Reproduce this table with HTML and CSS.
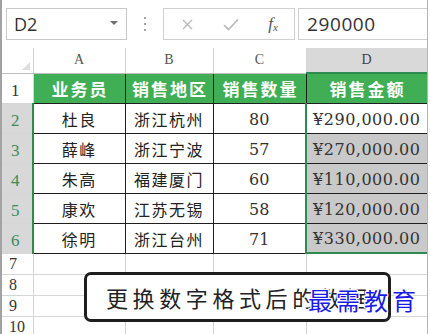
FILE: index.html
```html
<!DOCTYPE html>
<html lang="zh-CN">
<head>
<meta charset="utf-8">
<title>销售表</title>
<link rel="stylesheet" href="styles.css">
</head>
<body>
<div class="sheet">
  <div class="toolbar">
    <div class="namebox"><span class="ref">D2</span><span class="caret"></span></div>
    <div class="grip"><i></i><i></i><i></i></div>
    <div class="fxbox">
      <span class="slot s1"><svg width="11" height="11" viewBox="0 0 11 11"><path d="M1 1L10 10M10 1L1 10" stroke="#b9b9b9" stroke-width="1.4" fill="none"/></svg></span>
      <span class="slot s2"><svg width="16" height="13" viewBox="0 0 16 13"><path d="M1 7L5.5 11.5L15 1.5" stroke="#b9b9b9" stroke-width="1.6" fill="none"/></svg></span>
      <span class="slot s3"><span class="fx">f<span class="fxsub">x</span></span></span>
    </div>
    <div class="formula">290000</div>
  </div>
  <table class="grid">
    <colgroup>
      <col class="c0"><col class="c1"><col class="c2"><col class="c3"><col class="c4">
    </colgroup>
    <tr class="colhead">
      <th class="corner"><span class="tri"></span></th>
      <th>A</th><th>B</th><th>C</th><th class="selcol">D</th>
    </tr>
    <tr class="row">
      <th class="rn">1</th>
      <td class="hd">业务员</td><td class="hd">销售地区</td><td class="hd">销售数量</td><td class="hd">销售金额</td>
    </tr>
    <tr class="row">
      <th class="rn sel">2</th>
      <td class="cn">杜良</td><td class="cn">浙江杭州</td><td class="num">80</td><td class="num money active">¥290,000.00</td>
    </tr>
    <tr class="row">
      <th class="rn sel">3</th>
      <td class="cn">薛峰</td><td class="cn">浙江宁波</td><td class="num">57</td><td class="num money picked">¥270,000.00</td>
    </tr>
    <tr class="row">
      <th class="rn sel">4</th>
      <td class="cn">朱高</td><td class="cn">福建厦门</td><td class="num">60</td><td class="num money picked">¥110,000.00</td>
    </tr>
    <tr class="row">
      <th class="rn sel">5</th>
      <td class="cn">康欢</td><td class="cn">江苏无锡</td><td class="num">58</td><td class="num money picked">¥120,000.00</td>
    </tr>
    <tr class="row">
      <th class="rn sel">6</th>
      <td class="cn">徐明</td><td class="cn">浙江台州</td><td class="num">71</td><td class="num money picked last">¥330,000.00</td>
    </tr>
    <tr class="empty"><th class="rn">7</th><td></td><td></td><td></td><td></td></tr>
    <tr class="empty"><th class="rn">8</th><td></td><td></td><td></td><td></td></tr>
    <tr class="empty"><th class="rn">9</th><td></td><td></td><td></td><td></td></tr>
    <tr class="empty"><th class="rn">10</th><td></td><td></td><td></td><td></td></tr>
  </table>
  <div class="callout">更换数字格式后的数据</div>
  <div class="watermark">最需教育</div>
</div>
</body>
</html>
```
FILE: styles.css
```css
html, body {
  margin: 0;
  padding: 0;
  background: #fff;
}
body {
  width: 430px;
  height: 334px;
  overflow: hidden;
}
.sheet {
  position: relative;
  width: 428px;
  height: 334px;
  box-sizing: border-box;
  border-left: 2px solid #a3a3a3;
  border-right: 1px solid #b5b5b5;
  overflow: hidden;
}
.toolbar {
  height: 48px;
  box-sizing: border-box;
  padding-top: 8px;
  display: flex;
  align-items: flex-start;
}
.namebox {
  margin-left: 4px;
  width: 121px;
  height: 32px;
  box-sizing: border-box;
  border: 1px solid #c8c8c8;
  display: flex;
  align-items: center;
  justify-content: space-between;
  padding: 0 8px 0 7px;
  font-family: "Open Sans", sans-serif;
  font-size: 18px;
  color: #333;
}
.caret {
  width: 0;
  height: 0;
  border-left: 4px solid transparent;
  border-right: 4px solid transparent;
  border-top: 4px solid #707070;
  margin-bottom: 2px;
}
.grip {
  width: 36px;
  height: 32px;
  display: flex;
  flex-direction: column;
  align-items: center;
  justify-content: center;
  gap: 4px;
}
.grip i {
  display: block;
  width: 2px;
  height: 2px;
  background: #a0a0a0;
}
.fxbox {
  width: 132px;
  height: 32px;
  box-sizing: border-box;
  border: 1px solid #d0d0d0;
  display: flex;
  align-items: center;
}
.slot {
  display: flex;
  align-items: center;
  justify-content: center;
  height: 30px;
}
.s1 { width: 46px; }
.s2 { width: 42px; }
.s3 { width: 42px; }
.fx {
  font-family: "Liberation Serif", serif;
  font-style: italic;
  font-size: 17px;
  color: #555;
}
.fxsub {
  font-size: 11px;
  position: relative;
  top: 2px;
}
.formula {
  margin-left: 3px;
  flex: 1;
  height: 32px;
  box-sizing: border-box;
  border: 1px solid #d0d0d0;
  border-right: none;
  padding-left: 8px;
  display: flex;
  align-items: center;
  font-family: "Open Sans", sans-serif;
  font-size: 19px;
  letter-spacing: 0.6px;
  color: #333;
}
.grid {
  border-collapse: collapse;
  table-layout: fixed;
  width: 425px;
}
.c0 { width: 31px; }
.c1 { width: 92px; }
.c2 { width: 88px; }
.c3 { width: 93px; }
.c4 { width: 121px; }
.grid th, .grid td {
  padding: 0;
  border: 1px solid #d6d6d6;
}
.colhead th {
  height: 24px;
  font-family: "Liberation Serif", serif;
  font-weight: normal;
  font-size: 14px;
  color: #555;
  background: #fff;
  border-top: none;
  border-bottom: 1px solid #bdbdbd;
}
.colhead .corner {
  border-left: none;
  position: relative;
}
.tri {
  position: absolute;
  right: 3px;
  bottom: 3px;
  width: 0;
  height: 0;
  border-left: 8px solid transparent;
  border-bottom: 8px solid #dcdcdc;
}
.colhead .selcol {
  background: #d9d9d9;
  border-bottom: 2px solid #2f8a4e;
  color: #444;
}
.row { height: 30px; }
.empty { height: 21px; }
.rn {
  border-left: none !important;
  text-align: left;
  vertical-align: bottom;
  padding: 0 0 2px 9px !important;
  font-family: "Liberation Serif", serif;
  font-weight: normal;
  font-size: 17px;
  color: #333;
  background: #fff;
}
.empty .rn {
  padding: 0 0 1px 7px !important;
  font-size: 16px;
}
.rn.sel {
  background: #d8d8d8;
  color: #3f8a57;
  border-right: 2px solid #2f8a4e;
}
.row td {
  border: 1px solid #1f1f1f;
  text-align: center;
  vertical-align: middle;
}
.hd {
  background: #3fae55;
  color: #fff;
  font-family: "Noto Sans CJK SC", sans-serif;
  font-weight: 700;
  font-size: 17px;
  letter-spacing: 2px;
  padding-left: 2px !important;
}
.cn {
  font-family: "Noto Sans CJK SC", sans-serif;
  font-size: 16px;
  letter-spacing: 1.5px;
  color: #222;
  padding-top: 2px !important;
}
.num {
  font-family: "DejaVu Serif", serif;
  font-size: 16px;
  color: #333;
  padding-top: 2px !important;
}
.money {
  letter-spacing: 0.5px;
  border-left: 2px solid #2f8a4e !important;
}
.picked { background: #c9c9c9; }
.last { border-bottom: 2px solid #2f8a4e !important; }
.callout {
  position: absolute;
  left: 82px;
  top: 272px;
  width: 307px;
  height: 50px;
  box-sizing: border-box;
  border: 3px solid #1e1e1e;
  border-radius: 7px;
  background: #fff;
  display: flex;
  align-items: center;
  padding-left: 19px;
  font-family: "Noto Sans CJK SC", sans-serif;
  font-size: 22px;
  letter-spacing: 4.6px;
  color: #222;
}
.watermark {
  position: absolute;
  left: 306px;
  top: 288px;
  font-family: "Noto Sans CJK SC", sans-serif;
  font-size: 24px;
  line-height: 24px;
  letter-spacing: 4px;
  color: #1b1be6;
  text-shadow: 1px 0 #fff, -1px 0 #fff, 0 1px #fff, 0 -1px #fff, 1px 1px #fff, -1px -1px #fff, 1px -1px #fff, -1px 1px #fff;
}
```
